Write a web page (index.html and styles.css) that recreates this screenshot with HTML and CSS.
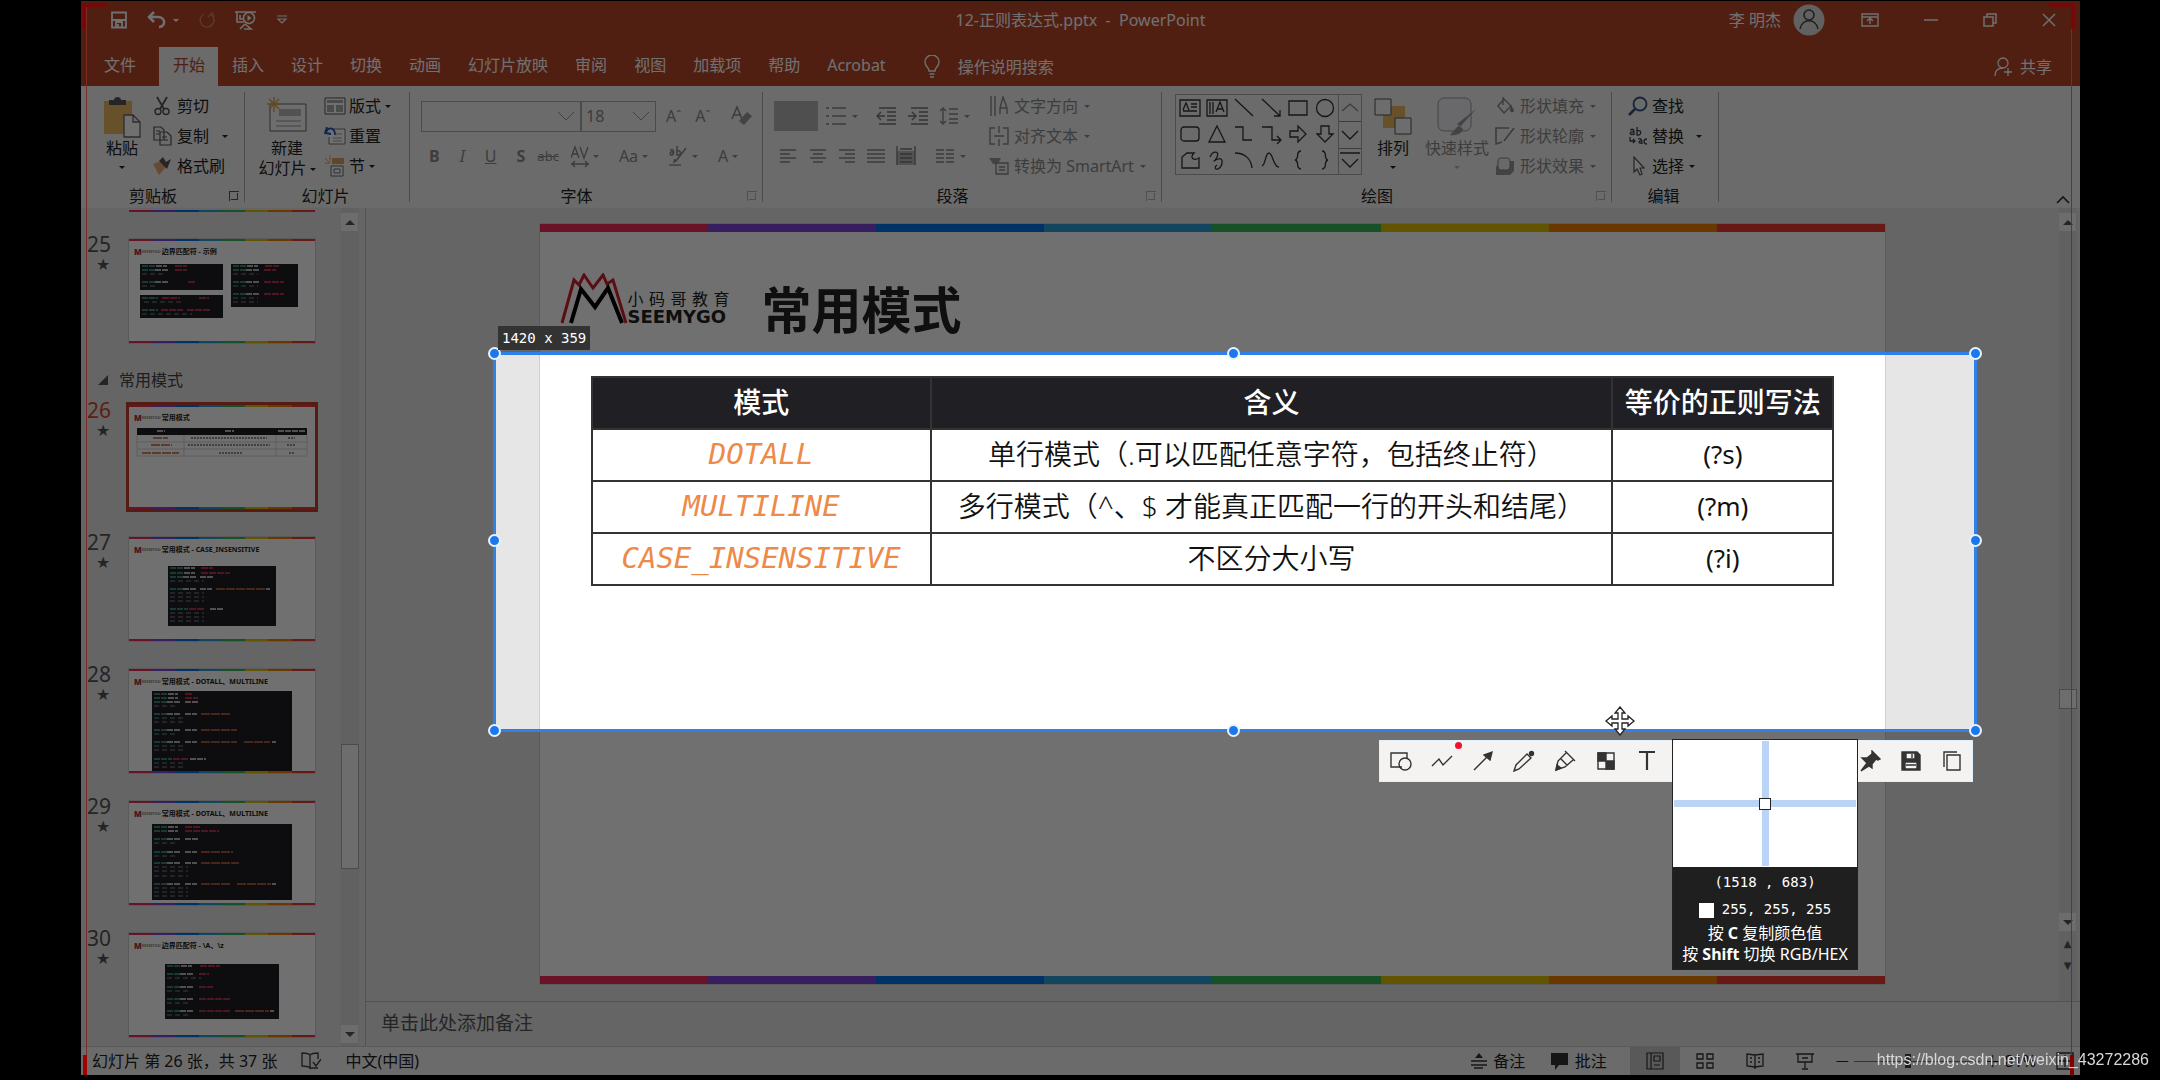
FILE: index.html
```html
<!DOCTYPE html>
<html lang="zh-CN">
<head>
<meta charset="utf-8">
<title>12-正则表达式.pptx - PowerPoint</title>
<link rel="stylesheet" href="styles.css">
</head>
<body>
<div class="app">
  <header class="titlebar">
    <div class="quick">
      <button aria-label="保存"><svg width="18" height="18" viewBox="0 0 18 18"><path d="M2 1.500h14v15H2zM2 9h14M6 16v-5h6v5M8 13v3" fill="none" stroke="#fff" stroke-width="1.800"/></svg></button>
      <button aria-label="撤消"><svg width="20" height="18" viewBox="0 0 20 18"><path d="M7 1L2 6l5 5M2 6h9c8 0 8 10 1 10" fill="none" stroke="#fff" stroke-width="2.500"/></svg><i class="caret"></i></button>
      <button aria-label="重复" class="faint"><svg width="18" height="18" viewBox="0 0 18 18"><path d="M6 3C-1 8 3 16 9 16s10-8 4-13M10 6l4-4 2 4" fill="none" stroke="#fff" stroke-width="1.500"/></svg></button>
      <button aria-label="从头开始"><svg width="22" height="20" viewBox="0 0 22 20"><path d="M0 2h21M2 2v10h7M5 5v4h4M10 14l-5 5M10 14l6 5H9" fill="none" stroke="#fff" stroke-width="1.600"/><circle cx="14" cy="8" r="5.500" fill="none" stroke="#fff" stroke-width="1.500"/><path d="M12.500 5l4 3-4 3z" fill="#fff"/></svg></button>
      <button aria-label="自定义"><svg width="12" height="12" viewBox="0 0 12 12"><path d="M1 2h10M2 5l4 4 4-4z" fill="none" stroke="#fff" stroke-width="1.200"/></svg></button>
    </div>
    <h1>12-正则表达式.pptx&nbsp; -&nbsp; PowerPoint</h1>
    <div class="window-tools">
      <span>李 明杰</span>
      <svg width="32" height="32" viewBox="0 0 32 32"><circle cx="16" cy="16" r="15.500" fill="#dcdcdc"/><circle cx="16" cy="11" r="5" fill="none" stroke="#444" stroke-width="1.500"/><path d="M7 25c2-11 16-11 18 0" fill="none" stroke="#444" stroke-width="1.500"/></svg>
      <button aria-label="功能区选项"><svg width="18" height="14" viewBox="0 0 18 14"><path d="M1 1h16v12H1zM1 4h16M9 11V6M6 8l3-3 3 3" fill="none" stroke="#fff" stroke-width="1.400"/></svg></button>
      <button aria-label="最小化"><svg width="14" height="14" viewBox="0 0 14 14"><path d="M0 7h14" stroke="#fff" stroke-width="1.500"/></svg></button>
      <button aria-label="还原"><svg width="14" height="14" viewBox="0 0 14 14"><path d="M1 4h9v9H1zM4 4V1h9v9h-3" fill="none" stroke="#fff" stroke-width="1.500"/></svg></button>
      <button aria-label="关闭"><svg width="14" height="14" viewBox="0 0 14 14"><path d="M1 1l12 12M13 1L1 13" stroke="#fff" stroke-width="1.500"/></svg></button>
    </div>
  </header>

  <nav class="tabs">
    <a class="file" href="#">文件</a><a class="active" href="#">开始</a><a href="#">插入</a><a href="#">设计</a><a href="#">切换</a><a href="#">动画</a><a href="#">幻灯片放映</a><a href="#">审阅</a><a href="#">视图</a><a href="#">加载项</a><a href="#">帮助</a><a href="#">Acrobat</a>
    <button class="tell"><svg width="16" height="24" viewBox="0 0 16 24"><path d="M5 16c0-4-4-4-4-9a7 7 0 0 1 14 0c0 5-4 5-4 9zM5.500 19h5M6 22h4" fill="none" stroke="#fff" stroke-width="1.400"/></svg>操作说明搜索</button>
    <button class="share"><svg width="20" height="20" viewBox="0 0 20 20"><circle cx="9" cy="6" r="5" fill="none" stroke="#fff" stroke-width="1.300"/><path d="M1 19c0-5 3-8 8-8M14 11v8M10 15h8" fill="none" stroke="#fff" stroke-width="1.300"/></svg>共享</button>
  </nav>

  <section class="ribbon">
    <div class="group clipboard">
      <div class="body">
        <button class="big"><svg width="38" height="42" viewBox="0 0 38 42"><path d="M1 5h28v33H1z" fill="#e8b860"/><path d="M6 9V4h5c0-4 7-4 7 0h5v5z" fill="#555"/><path d="M21 19h9l7 7v15H21zM30 19v7h7" fill="#fff" stroke="#666" stroke-width="1.300"/></svg><span>粘贴</span><i class="caret"></i></button>
        <div class="stack">
          <button><svg width="20" height="20" viewBox="0 0 20 20"><path d="M5 1l7 12M15 1L8 13" stroke="#555" stroke-width="1.800"/><circle cx="6" cy="15.500" r="3" fill="none" stroke="#456" stroke-width="1.400"/><circle cx="14" cy="15.500" r="3" fill="none" stroke="#456" stroke-width="1.400"/></svg>剪切</button>
          <button><svg width="20" height="20" viewBox="0 0 20 20"><path d="M2 1h7l3 3v10H2zM4 5h4M4 8h4M8 6h7l4 4v9H8zM10 11h5M10 14h6" fill="#f3f3f3" stroke="#555" stroke-width="1.200"/></svg>复制<i class="caret far"></i></button>
          <button><svg width="20" height="20" viewBox="0 0 20 20"><path d="M1 8l8-3 5 6-7 8z" fill="#e8a878"/><path d="M7 5l8 8 4-10-5 3-3-5z" fill="#555"/></svg>格式刷</button>
        </div>
      </div>
      <div class="caption">剪贴板<button class="launch" aria-label="更多"></button></div>
    </div>

    <div class="group slides">
      <div class="body">
        <button class="big"><svg width="42" height="40" viewBox="0 0 42 40"><path d="M4 7h36v27H4z" fill="#f8f8f8" stroke="#666"/><path d="M13 12h22v7H13z" fill="#bbb"/><path d="M10 24h25M10 29h25" stroke="#999"/><path d="M8 0v15M1 7h15M3 2l10 10M13 2L3 12" stroke="#e0a850" stroke-width="1.500"/></svg><span>新建</span><span>幻灯片<i class="caret"></i></span></button>
        <div class="stack">
          <button><svg width="22" height="18" viewBox="0 0 22 18"><path d="M1 1h20v16H1z" fill="#fff" stroke="#555"/><path d="M3 3h16v3H3zM3 8h7v7H3zM12 8h7v7h-7z" fill="#aaa"/></svg>版式<i class="caret"></i></button>
          <button><svg width="22" height="20" viewBox="0 0 22 20"><path d="M8 3h13v15H5V11" fill="#fff" stroke="#777"/><path d="M11 8h7M9 12h9M9 15h9" stroke="#999"/><path d="M3 1L1 7l6 1M2 6c3-6 9-4 9 3" fill="none" stroke="#2255b0" stroke-width="1.800"/></svg>重置</button>
          <button><svg width="22" height="22" viewBox="0 0 22 22"><path d="M1 3l5 5M6 0v6M1 8h5" stroke="#e0a060"/><path d="M8 3h12v6H8z" fill="#e0a060"/><path d="M7 11h12v10H7zM10 14h6v4h-6z" fill="#fff" stroke="#666"/></svg>节<i class="caret"></i></button>
        </div>
      </div>
      <div class="caption">幻灯片</div>
    </div>

    <div class="group font">
      <div class="body rows disabled">
        <div class="line">
          <select class="face" aria-label="字体"><option></option></select><select class="size" aria-label="字号"><option>18</option></select>
          <button class="grow">A<sup>ˆ</sup></button><button class="shrink">A<sup>ˇ</sup></button>
          <button aria-label="清除格式"><svg width="22" height="22" viewBox="0 0 22 22"><path d="M1 14L6 2l5 12M3 10h7" fill="none" stroke="#888" stroke-width="1.500"/><path d="M8 16l8-9 5 4-8 9z" fill="#999"/></svg></button>
        </div>
        <div class="line letters">
          <button><b>B</b></button><button><em>I</em></button><button><u>U</u></button><button><b>S</b></button><button class="mini"><s>abc</s></button>
          <button><svg width="18" height="22" viewBox="0 0 18 22"><path d="M0 13L4 2l4 11M2 9h5M9 2l4 11 4-11M0 19h18M4 16l-3 3 3 3M14 16l3 3-3 3" fill="none" stroke="#888" stroke-width="1.300"/></svg><i class="caret"></i></button>
          <button>Aa<i class="caret"></i></button>
          <button><svg width="20" height="22" viewBox="0 0 20 22"><path d="M2 5c5-2 4 5 2 5s-3-4 1-3v3M9 1v9c5 1 4-6 0-4M18 3L8 16l-2 1 1-3" fill="none" stroke="#888" stroke-width="1.500"/><path d="M1 19h12v2H1z" fill="#aaa"/></svg><i class="caret"></i></button>
          <button>A<i class="caret"></i></button>
        </div>
      </div>
      <div class="caption">字体<button class="launch off" aria-label="更多"></button></div>
    </div>

    <div class="group para">
      <div class="body disabled">
        <div class="rows">
          <div class="line">
            <button class="pressed" aria-label="项目符号"></button>
            <button><svg width="20" height="20" viewBox="0 0 20 20"><path d="M0 2h3M6 2h14M0 10h3M6 10h14M0 18h3M6 18h14" stroke="#888" stroke-width="1.500"/></svg><i class="caret"></i></button>
            <button><svg width="20" height="18" viewBox="0 0 20 18"><path d="M3 1h17M11 5h9M11 9h9M11 13h9M3 17h17M9 9H1M5 5L1 9l4 4" fill="none" stroke="#777" stroke-width="1.400"/></svg></button>
            <button><svg width="20" height="18" viewBox="0 0 20 18"><path d="M3 1h17M11 5h9M11 9h9M11 13h9M3 17h17M0 9h8M4 5l4 4-4 4" fill="none" stroke="#777" stroke-width="1.400"/></svg></button>
            <button><svg width="18" height="18" viewBox="0 0 18 18"><path d="M3 1v16M0 4l3-3 3 3M0 14l3 3 3-3M9 2h9M9 7h9M9 12h9M9 16h9" fill="none" stroke="#888" stroke-width="1.400"/></svg><i class="caret"></i></button>
          </div>
          <div class="line aligns">
            <button><svg width="18" height="14" viewBox="0 0 18 14"><path d="M0 1h16M0 5h10M0 9h16M0 13h10" stroke="#888" stroke-width="1.300"/></svg></button>
            <button><svg width="18" height="14" viewBox="0 0 18 14"><path d="M1 1h16M4 5h10M1 9h16M4 13h10" stroke="#888" stroke-width="1.300"/></svg></button>
            <button><svg width="18" height="14" viewBox="0 0 18 14"><path d="M1 1h16M7 5h10M1 9h16M7 13h10" stroke="#888" stroke-width="1.300"/></svg></button>
            <button><svg width="18" height="14" viewBox="0 0 18 14"><path d="M0 1h18M0 5h18M0 9h18M0 13h18" stroke="#888" stroke-width="1.300"/></svg></button>
            <button><svg width="20" height="20" viewBox="0 0 20 20"><path d="M1 5h18v14H1z" fill="#bbb"/><path d="M1 0v19M19 0v19M4 3h12M4 8h12M4 12h12M4 16h12" stroke="#777" stroke-width="1.300"/></svg></button>
            <button class="columns"><svg width="18" height="14" viewBox="0 0 18 14"><path d="M0 1h8M10 1h8M0 5h8M10 5h8M0 9h8M10 9h8M0 13h8M10 13h8" stroke="#888" stroke-width="1.300"/></svg><i class="caret"></i></button>
          </div>
        </div>
        <div class="stack">
          <button><svg width="20" height="20" viewBox="0 0 20 20"><path d="M2 0v20M6 0v20M11 18v-6l3-11 4 11v6M11 12h7" fill="none" stroke="#888" stroke-width="1.400"/></svg>文字方向<i class="caret"></i></button>
          <button><svg width="20" height="20" viewBox="0 0 20 20"><path d="M6 2H1v16h5M14 2h5v16h-5M10 0v7M10 13v7M5 10h10" fill="none" stroke="#888" stroke-width="1.400"/></svg>对齐文本<i class="caret"></i></button>
          <button><svg width="20" height="20" viewBox="0 0 20 20"><path d="M0 2h12l-3 6H4z" fill="#999"/><path d="M7 7h12v11H7zM10 11h6M10 14h6" fill="#eee" stroke="#888" stroke-width="1.300"/></svg>转换为 SmartArt<i class="caret"></i></button>
        </div>
      </div>
      <div class="caption">段落<button class="launch off" aria-label="更多"></button></div>
    </div>

    <div class="group draw">
      <div class="body">
        <div class="gallery">
          <div class="shapes">
            <button><svg viewBox="0 0 22 22"><path d="M1 3h20v16H1zM12 7h6M12 10h6M4 14h14M4 13l3-7 3 7"/></svg></button>
            <button><svg viewBox="0 0 22 22"><path d="M1 3h20v16H1zM4 5v12M7 5v12M10 15l4-10 4 10M11 12h6"/></svg></button>
            <button><svg viewBox="0 0 22 22"><path d="M2 2l18 17"/></svg></button>
            <button><svg viewBox="0 0 22 22"><path d="M2 2l18 17M20 13v6h-6"/></svg></button>
            <button><svg viewBox="0 0 22 22"><path d="M2 4h18v14H2z"/></svg></button>
            <button><svg viewBox="0 0 22 22"><circle cx="11" cy="11" r="8.500"/></svg></button>
            <button><svg viewBox="0 0 22 22"><rect x="2" y="4" width="18" height="14" rx="3"/></svg></button>
            <button><svg viewBox="0 0 22 22"><path d="M11 3l8 16H3z"/></svg></button>
            <button><svg viewBox="0 0 22 22"><path d="M2 4h8v13h9"/></svg></button>
            <button><svg viewBox="0 0 22 22"><path d="M2 4h10v13h8M17 13l4 4-4 4"/></svg></button>
            <button><svg viewBox="0 0 22 22"><path d="M3 8h8V3l8 8-8 8v-5H3z"/></svg></button>
            <button><svg viewBox="0 0 22 22"><path d="M7 3h8v8h4l-8 8-8-8h4z"/></svg></button>
            <button><svg viewBox="0 0 22 22"><path d="M3 19V8l5-4h7c-5 5 0 8 5 5v10z"/></svg></button>
            <button><svg viewBox="0 0 22 22"><path d="M4 8c3-7 10-6 7 0s-5 4 1 2 5 7 0 10c-3 1-4-2-1-4"/></svg></button>
            <button><svg viewBox="0 0 22 22"><path d="M2 4c10 0 16 6 17 15"/></svg></button>
            <button><svg viewBox="0 0 22 22"><path d="M2 17C6 15 5 4 9 4s4 14 10 14"/></svg></button>
            <button><svg viewBox="0 0 22 22"><path d="M14 2c-6 0-1 8-6 9 5 1 0 9 6 9"/></svg></button>
            <button><svg viewBox="0 0 22 22"><path d="M8 2c6 0 1 8 6 9-5 1 0 9-6 9"/></svg></button>
          </div>
          <div class="roll">
            <button aria-label="上一行"><svg viewBox="0 0 22 22"><path d="M3 14l8-7 8 7" stroke="#888"/></svg></button>
            <button aria-label="下一行"><svg viewBox="0 0 22 22"><path d="M3 7l8 8 8-8"/></svg></button>
            <button aria-label="其他"><svg viewBox="0 0 22 22"><path d="M1 3h20M3 9l8 8 8-8"/></svg></button>
          </div>
        </div>
        <button class="big arrange"><svg width="38" height="38" viewBox="0 0 38 38"><path d="M9 8h22v22H9z" fill="#e8b860"/><path d="M1 1h16v16H1zM21 20h16v16H21z" fill="#f8f8f8" stroke="#555"/></svg><span>排列</span><i class="caret"></i></button>
        <button class="big styles disabled"><svg width="42" height="40" viewBox="0 0 42 40"><rect x="2" y="1" width="33" height="33" rx="6" fill="#eeeef6" stroke="#999"/><path d="M40 12L24 30l-3-3zM23 28l-9 10c7 1 12-2 13-6z" fill="#999"/></svg><span>快速样式</span><i class="caret"></i></button>
        <div class="stack disabled">
          <button><svg width="20" height="20" viewBox="0 0 20 20"><path d="M9 3l7 7-7 7-6-7zM8 9V1" fill="none" stroke="#888" stroke-width="1.400"/><path d="M16 9l3 5c0 3-4 3-4 0z" fill="#888"/></svg>形状填充<i class="caret"></i></button>
          <button><svg width="20" height="20" viewBox="0 0 20 20"><path d="M14 2H1v16l6-2M19 2L9 15" fill="none" stroke="#888" stroke-width="1.600"/></svg>形状轮廓<i class="caret"></i></button>
          <button><svg width="20" height="20" viewBox="0 0 20 20"><path d="M5 5h14v10l-4 4H1v-8z" fill="#999"/><rect x="3" y="2" width="12" height="12" rx="3" fill="#eee" stroke="#888"/></svg>形状效果<i class="caret"></i></button>
        </div>
      </div>
      <div class="caption">绘图<button class="launch off" aria-label="更多"></button></div>
    </div>

    <div class="group edit">
      <div class="body">
        <div class="stack">
          <button><svg width="20" height="20" viewBox="0 0 20 20"><circle cx="12" cy="8" r="6.500" fill="none" stroke="#36527c" stroke-width="1.800"/><path d="M7 13l-6 6" stroke="#36527c" stroke-width="2.500"/></svg>查找</button>
          <button><svg width="20" height="20" viewBox="0 0 20 20"><path d="M2 4c4-2 4 0 4 5M6 6c-5-1-5 4 0 2M9 1v8c5 1 5-6 0-4M10 13c3-1 4 0 4 5M14 15c-4-1-4 3 0 2M19 13c-4 0-4 5 0 5M2 11v4h5M5 13l2 2-2 2" fill="none" stroke="#345" stroke-width="1.300"/></svg>替换<i class="caret far"></i></button>
          <button><svg width="20" height="20" viewBox="0 0 20 20"><path d="M6 1v15l3-3 3 6 2-1-2-6h4z" fill="#fff" stroke="#555" stroke-width="1.200"/></svg>选择<i class="caret"></i></button>
        </div>
      </div>
      <div class="caption">编辑</div>
    </div>
    <button class="collapse" aria-label="折叠功能区"><svg width="14" height="10" viewBox="0 0 14 10"><path d="M1 8l6-6 6 6" fill="none" stroke="#333" stroke-width="1.600"/></svg></button>
  </section>

  <main class="workspace">
    <aside class="panel">
      <ol class="list">
        <li class="tail"><div class="rainbow"></div></li>
        <li class="item"><div class="num">25<span>★</span></div>
          <div class="thumb"><div class="rainbow"></div><p class="heading"><b>M</b><small>SEEMYGO</small>边界匹配符 - 示例</p>
          <svg class="code" viewBox="0 0 186 80"><path class="bg" d="M11 3h83v26H11zM11 34h83v23H11zM102 3h67v43h-67z"/><path class="g" d="M13 5h13M13 9h13M13 21h13M13 37h16M13 49h16M104 5h13M104 9h13M104 21h13M104 33h13"/><path class="w" d="M27 5h11M26 9h14M26 21h14M118 5h11M117 9h14M117 21h14M117 33h14"/><path class="r" d="M46 5h12M46 9h12M59 21h8M33 37h18M70 37h10M32 49h22M58 49h24M136 5h14M135 9h12M135 21h20M135 33h20"/><path class="m" d="M13 13h22M13 25h13M15 41h38M13 53h50M104 13h25M104 25h25M104 37h25M104 41h25"/></svg><div class="rainbow"></div></div></li>
        <li class="section"><i></i>常用模式</li>
        <li class="item current"><div class="num">26<span>★</span></div>
          <div class="thumb"><div class="rainbow"></div><p class="heading"><b>M</b><small>SEEMYGO</small>常用模式</p>
          <svg class="code" viewBox="0 0 186 80"><path class="bg" d="M8 1h170v7H8z"/><path class="rule" d="M8 15h170M8 22h170M8 29h170M55 8v21M147 8v21M8 8v21M178 8v21"/><path class="w" d="M28 4h8M96 4h9M149 4h27"/><path class="o" d="M24 11h15M22 18h21M13 26h37"/><path d="M62 11h76M59 18h82M90 26h23M159 11h7M158 18h9M160 26h5" stroke="#777" stroke-dasharray="2 1"/></svg><div class="rainbow"></div></div></li>
        <li class="item"><div class="num">27<span>★</span></div>
          <div class="thumb"><div class="rainbow"></div><p class="heading"><b>M</b><small>SEEMYGO</small>常用模式 - CASE_INSENSITIVE</p>
          <svg class="code" viewBox="0 0 186 80"><path class="bg" d="M39 7h108v60H39z"/><path class="g" d="M41 9h13M41 14h13M41 18h13M41 30h13M41 50h18"/><path class="w" d="M55 9h11M55 14h11M54 18h14M71 18h14M54 30h14M71 30h12M137 30h4M81 50h14"/><path class="r" d="M72 9h12M72 14h29M60 50h16"/><path class="o" d="M87 30h49"/><path class="m" d="M41 22h34M41 34h34M41 38h34M41 42h34M41 54h34M41 58h34M41 62h34"/></svg><div class="rainbow"></div></div></li>
        <li class="item"><div class="num">28<span>★</span></div>
          <div class="thumb"><div class="rainbow"></div><p class="heading"><b>M</b><small>SEEMYGO</small>常用模式 - DOTALL、MULTILINE</p>
          <svg class="code" viewBox="0 0 186 80"><path class="bg" d="M23 0h140v80H23z"/><path class="g" d="M25 3h13M25 7h13M25 11h13M25 23h13M25 39h13M25 51h13M25 68h18"/><path class="w" d="M39 3h10M39 7h10M38 11h14M56 11h14M38 23h14M56 23h12M38 39h14M56 39h12M38 51h14M56 51h12M61 68h16M143 51h4"/><path class="r" d="M56 3h8M56 7h13M44 68h15"/><path class="o" d="M72 23h30M72 39h36M72 51h36M115 51h26"/><path class="m" d="M25 15h22M25 27h32M25 31h32M25 43h22M25 55h32M25 59h32M25 72h32M25 76h32"/></svg><div class="rainbow"></div></div></li>
        <li class="item"><div class="num">29<span>★</span></div>
          <div class="thumb"><div class="rainbow"></div><p class="heading"><b>M</b><small>SEEMYGO</small>常用模式 - DOTALL、MULTILINE</p>
          <svg class="code" viewBox="0 0 186 80"><path class="bg" d="M23 1h140v76H23z"/><path class="g" d="M25 4h13M25 8h13M25 16h13M25 29h13M25 40h13M25 61h13"/><path class="w" d="M39 4h10M39 8h10M38 16h14M56 16h14M38 29h14M56 29h12M38 40h14M56 40h12M38 61h14M56 61h12M143 61h4"/><path class="r" d="M56 4h16M56 8h34"/><path class="o" d="M72 29h32M72 40h38M72 61h30M108 61h34"/><path class="m" d="M25 20h22M25 33h22M25 44h34M25 48h34M25 53h34M25 65h34M25 69h34M25 73h34"/></svg><div class="rainbow"></div></div></li>
        <li class="item"><div class="num">30<span>★</span></div>
          <div class="thumb"><div class="rainbow"></div><p class="heading"><b>M</b><small>SEEMYGO</small>边界匹配符 - \A、\z</p>
          <svg class="code" viewBox="0 0 186 80"><path class="bg" d="M36 9h114v55H36z"/><path class="g" d="M38 11h13M38 19h13M38 32h13M38 44h13M38 56h13"/><path class="w" d="M52 11h11M51 19h14M51 32h14M51 44h14M51 56h14M141 56h4"/><path class="r" d="M71 11h20M70 19h10M70 32h14M70 44h31M70 56h32"/><path class="o" d="M106 56h34"/><path class="m" d="M38 23h34M38 36h22M38 48h22M38 60h22"/></svg><div class="rainbow"></div></div></li>
      </ol>
      <div class="scroll"><button aria-label="向上滚动" class="up"></button><div class="knob"></div><button aria-label="向下滚动" class="down"></button></div>
    </aside>

    <section class="editor">
      <div class="stage">
        <div class="canvas">
          <article class="slide">
            <div class="rainbow"></div>
            <header class="slide-head">
              <svg width="68" height="52" viewBox="0 0 68 52"><path d="M2 50L14 7l5 5 5-10 9 13 10-13 4 9 6-4 13 43" fill="none" stroke="#d01f2e" stroke-width="3"/><path d="M11 50L21 16l14 18 13-19 14 35" fill="none" stroke="#000" stroke-width="4"/></svg>
              <div class="brand"><span>小码哥教育</span><b>SEEMYGO</b></div>
              <h2>常用模式</h2>
            </header>
            <table>
              <thead><tr><th>模式</th><th>含义</th><th>等价的正则写法</th></tr></thead>
              <tbody>
                <tr><td>DOTALL</td><td>单行模式（.可以匹配任意字符，包括终止符）</td><td>(?s)</td></tr>
                <tr><td>MULTILINE</td><td>多行模式（^、$ 才能真正匹配一行的开头和结尾）</td><td>(?m)</td></tr>
                <tr><td>CASE_INSENSITIVE</td><td>不区分大小写</td><td>(?i)</td></tr>
              </tbody>
            </table>
            <div class="rainbow bottom"></div>
          </article>
        </div>
        <div class="scroll right"><button aria-label="向上滚动" class="up"></button><div class="knob"></div><button aria-label="向下滚动" class="down"></button><button aria-label="上一张" class="jump">▲</button><button aria-label="下一张" class="jump">▼</button></div>
      </div>
      <div class="notes">单击此处添加备注</div>
    </section>
  </main>

  <footer class="status">
    <span>幻灯片 第 26 张，共 37 张</span>
    <svg width="20" height="18" viewBox="0 0 20 18"><path d="M9 3C7 1 4 1 1 1v13c3 0 6 0 8 2V3c2-2 5-2 8-2v6M9 16h8M12 10l3 4 5-7" fill="none" stroke="#444" stroke-width="1.400"/></svg>
    <span>中文(中国)</span>
    <div class="view">
      <button><svg width="16" height="16" viewBox="0 0 16 16"><path d="M8 0l4 5H4z" fill="#333"/><path d="M0 8h16M0 12h16M3 15h9" stroke="#333" stroke-width="1.400"/></svg>备注</button>
      <button><svg width="19" height="18" viewBox="0 0 19 18"><path d="M1 1h17v12H9l-4 5v-5H1z" fill="#333"/></svg>批注</button>
      <button class="on" aria-label="普通视图"><svg width="18" height="18" viewBox="0 0 18 18"><path d="M1 1h16v16H1zM5 1v16M8 4h6v5H8zM8 13h6" fill="none" stroke="#333" stroke-width="1.200"/></svg></button>
      <button aria-label="幻灯片浏览"><svg width="18" height="18" viewBox="0 0 18 18"><path d="M1 2h6v5H1zM11 2h6v5h-6zM1 11h6v5H1zM11 11h6v5h-6z" fill="none" stroke="#333" stroke-width="1.300"/></svg></button>
      <button aria-label="阅读视图"><svg width="18" height="18" viewBox="0 0 18 18"><path d="M9 3L1 2v12l8 1 8-1V2zM9 3v14M4 6h2M4 10h2M12 6h2M12 10h2" fill="none" stroke="#333" stroke-width="1.300"/></svg></button>
      <button aria-label="放映"><svg width="18" height="18" viewBox="0 0 18 18"><path d="M0 2h18M2 2v8h14V2M9 10v6M6 17h6M6 6h6" fill="none" stroke="#333" stroke-width="1.300"/></svg></button>
      <div class="zoom"><span>－</span><input type="range" aria-label="缩放" min="0" max="100" value="42"><span>＋</span><span>81%</span></div>
      <svg width="18" height="18" viewBox="0 0 18 18"><path d="M1 1h16v16H1zM9 3v12M3 9h12" fill="none" stroke="#333" stroke-width="1.300"/></svg>
    </div>
  </footer>

  <div class="selection">
    <i class="dot nw"></i><i class="dot n"></i><i class="dot ne"></i><i class="dot w"></i><i class="dot e"></i><i class="dot sw"></i><i class="dot s"></i><i class="dot se"></i>
    <span class="measure">1420 x 359</span>
    <div class="tools">
      <button aria-label="形状"><svg viewBox="0 0 22 22"><path d="M12 17H1V3h16v6"/><circle cx="15" cy="14" r="6"/></svg></button>
      <button aria-label="折线" class="new"><svg viewBox="0 0 22 22"><path d="M1 16l7-7 4 6 9-9"/></svg></button>
      <button aria-label="箭头"><svg viewBox="0 0 22 22"><path d="M2 20L15 7"/><path class="solid" d="M20 2l-2 8-6-5z"/></svg></button>
      <button aria-label="铅笔"><svg viewBox="0 0 22 22"><path d="M14 4l4 4L6 19l-5 2 2-6z"/><circle class="solid" cx="18.500" cy="3.500" r="2"/></svg></button>
      <button aria-label="马克笔"><svg viewBox="0 0 22 22"><path d="M11 1l10 10M12 3L4 11 2 20l9-3 8-7M7 9l6 6"/><path class="solid" d="M3 15l4 3-5 2z"/></svg></button>
      <button aria-label="马赛克"><svg viewBox="0 0 22 22"><path d="M3 3h16v16H3z"/><path class="solid" d="M3 3h8v8H3zM11 11h8v8h-8z"/></svg></button>
      <button aria-label="文字"><svg viewBox="0 0 22 22"><path d="M3 2h16M11 2v18" stroke-width="2.200"/></svg></button>
      <button aria-label="贴图" class="pin"><svg viewBox="0 0 22 22"><path class="solid" d="M13 1l8 8-2 1-2-1-4 5v4l-3-2-8 5 6-8-5-5h5l5-4z"/></svg></button>
      <button aria-label="保存截图"><svg viewBox="0 0 22 22"><path class="solid" fill-rule="evenodd" d="M2 2h15l3 3v15H2zM6 3v6h9V3zM5 12v7h12v-7z"/><path d="M6 15h10M12 4v4"/></svg></button>
      <button aria-label="复制截图"><svg viewBox="0 0 22 22"><path d="M6 5h13v15H6zM3 17V2h13"/></svg></button>
    </div>
    <div class="magnifier">
      <div class="lens"><i></i></div>
      <p>(1518 , 683)</p>
      <p><i class="swatch"></i>255, 255, 255</p>
      <p class="hint">按 <b>C</b> 复制颜色值</p>
      <p class="hint">按 <b>Shift</b> 切换 RGB/HEX</p>
    </div>
    <svg class="cursor" width="30" height="30" viewBox="0 0 30 30"><path d="M15 1l5 6h-3v6h6v-3l6 5-6 5v-3h-6v6h3l-5 6-5-6h3v-6H7v3l-6-5 6-5v3h6V7h-3z" fill="#fff" stroke="#222" stroke-width="1.300"/></svg>
  </div>
  <div class="recorder"><i></i><i></i><i></i><i></i></div>
</div>
<a class="watermark" href="https://blog.csdn.net/weixin_43272286">https://blog.csdn.net/weixin_43272286</a>
</body>
</html>
```
FILE: styles.css
```css
* { box-sizing: border-box; }
body {
  margin: 0;
  background: #000;
  font: 16px/20px "Noto Sans", "Noto Sans CJK SC", sans-serif;
  color: #222;
}
button {
  display: flex;
  align-items: center;
  justify-content: center;
  padding: 0;
  border: 0;
  background: none;
  font: inherit;
  color: inherit;
  white-space: nowrap;
}
svg { display: block; flex: none; }
p, h1, h2, ol { margin: 0; padding: 0; }

.app {
  position: relative;
  display: flex;
  flex-direction: column;
  min-height: calc(100vh - 6px);
  margin: 1px 80px 5px 81px;
  overflow: hidden;
  background: #e6e6e6;
}
.caret {
  flex: none;
  display: inline-block;
  border: 3px solid transparent;
  border-top-color: currentColor;
  border-bottom: 0;
  margin-left: 6px;
  vertical-align: middle;
}

/* title bar and tabs */
.titlebar {
  display: grid;
  grid-template-columns: 1fr auto 1fr;
  align-items: center;
  height: 46px;
  padding-bottom: 8px;
  background: #b7472a;
  color: #fff;
}
.titlebar h1 { font-size: 16px; font-weight: 400; }
.quick { display: flex; align-items: center; gap: 19px; padding-left: 29px; }
.faint { opacity: .3; }
.window-tools { display: flex; justify-content: flex-end; align-items: center; padding-right: 24px; }
.window-tools svg { margin-left: 12px; }
.window-tools button svg { margin-left: 45px; }
.window-tools button:nth-of-type(1) svg { margin-left: 36px; }

.tabs { display: flex; height: 39px; background: #b7472a; color: #fff; padding-left: 9px; }
.tabs a {
  padding: 0 13px 0 14px;
  line-height: 36px;
  color: inherit;
  text-decoration: none;
}
.tabs .file { margin-right: 10px; }
.tabs .active { background: #f3f3f3; color: #b7472a; }
.tell { gap: 18px; margin-left: 25px; }
.share { gap: 6px; margin-left: auto; margin-right: 28px; }

/* ribbon */
.ribbon { display: flex; height: 122px; background: #f3f3f3; border-bottom: 1px solid #eee; }
.group { position: relative; flex: none; padding-top: 5px; }
.group::after {
  content: "";
  position: absolute;
  inset: 6px 0 5px auto;
  width: 1px;
  background: #aaa;
}
.group .body { display: flex; height: 90px; }
.caption { position: relative; text-align: center; line-height: 30px; padding-right: 20px; }
.slides .caption, .edit .caption { padding-right: 4px; }
.launch { position: absolute; right: 6px; top: 10px; width: 10px; height: 10px; border: solid #555; border-width: 1px 0 0 1px; }
.launch::after { content: ""; width: 6px; height: 6px; border: solid #555; border-width: 0 1px 1px 0; }
.launch.off { opacity: .4; }
.disabled { color: #8c8c8c; }
.stack { display: grid; grid-template-rows: 30px 30px 30px; justify-items: start; }
.stack button { gap: 5px; }
.stack .caret { margin-left: 1px; }
.stack .caret.far { margin-left: 8px; }
.big { flex-direction: column; justify-content: flex-start; padding-top: 5px; }
.big svg { height: 42px; }
.big > .caret { margin: 8px 0 0; }
.big span .caret { margin-left: 3px; }

.clipboard { width: 164px; }
.clipboard .big { width: 48px; margin: 0 6px 0 17px; }
.slides { width: 165px; }
.slides .big { width: 70px; margin: 0 2px 0 7px; }
.slides .stack button { gap: 3px; }

.rows { display: flex; flex-direction: column; }
.group .rows { padding-top: 10px; gap: 10px; }
.line { display: flex; align-items: center; height: 30px; }
.font { width: 353px; }
.font .body { padding-left: 11px; }
.font select {
  appearance: none;
  height: 31px;
  padding: 0 4px;
  border: 1px solid #aaa;
  border-radius: 0;
  color: #888;
  font: inherit;
  background: linear-gradient(-45deg, transparent 46%, #999 46% 56%, transparent 56%) right 6px center / 8px 8px no-repeat,
    linear-gradient(45deg, transparent 46%, #999 46% 56%, transparent 56%) right 14px center / 8px 8px no-repeat;
}
.font .face { width: 160px; }
.font .size { width: 75px; margin-right: 10px; }
.font sup { line-height: 8px; font-size: 12px; }
.grow { margin-right: 14px; }
.shrink { margin-right: 20px; }
.letters { gap: 20px; padding-left: 8px; }
.letters .caret { margin-left: 4px; }
.letters .mini { font-size: 13px; margin: 0 -8px; }

.para { width: 399px; }
.para .body { padding-left: 11px; }
.para .rows { width: 215px; }
.para .line { gap: 12px; }
.para .pressed { width: 44px; height: 30px; margin-right: -4px; background: #b5b5b5; }
.para .line .caret { margin: 0 6px; }
.para .aligns { gap: 11px; padding-left: 6px; }
.para .columns { margin-left: 9px; }

.draw { width: 450px; }
.draw .body { padding-left: 13px; }
.gallery { display: flex; height: 81px; margin-top: 3px; border: 1px solid #aaa; }
.shapes { display: grid; grid-template: repeat(3, 26px) / repeat(6, 27px); }
.gallery svg { width: 22px; height: 22px; fill: none; stroke: #333; stroke-width: 1.300; }
.roll { display: grid; grid-template-rows: repeat(3, 1fr); border-left: 1px solid #aaa; }
.roll button + button { border-top: 1px solid #888; }
.arrange { width: 44px; margin: 0 9px; }
.styles { width: 66px; margin-right: 5px; }
.styles > .caret { opacity: .6; }
.edit { width: 107px; }
.edit .body { padding-left: 16px; }
.edit .stack button { gap: 4px; }
.collapse { margin: auto 10px 2px auto; }

/* coloured strip at slide edges */
.rainbow {
  height: 2px;
  background: linear-gradient(90deg, #ee2c5c 12.5%, #7d45d8 12.5% 25%, #0073e6 25% 37.5%, #2a9fd6 37.5% 50%, #35b85c 50% 62.5%, #e0c000 62.5% 75%, #f08000 75% 87.5%, #e83a30 87.5%);
}

/* thumbnails */
.workspace { display: flex; flex: 1; }
.panel { display: flex; flex: none; width: 285px; border-right: 1px solid #bbb; }
.list { flex: 1; list-style: none; padding-left: 6px; overflow: hidden; }
.tail { padding: 2px 0 0 42px; width: 228px; }
.item { display: flex; margin-bottom: 28px; }
.item:last-child { margin-bottom: 0; }
.tail + .item { margin: 27px 0 0; }
.num { width: 42px; font-size: 21px; line-height: 22px; color: #555; margin-top: -6px; }
.num span { display: block; padding-left: 9px; font: 16px/20px "DejaVu Sans", sans-serif; }
.thumb {
  display: flex;
  flex-direction: column;
  width: 186px;
  height: 104px;
  background: #fff;
  box-shadow: 0 0 0 1px #ccc;
}
.current .num { color: #d24726; }
.current .num span { color: #555; }
.current .thumb { box-shadow: 0 0 0 3px #c43e2c; }
.heading { display: flex; align-items: center; height: 20px; padding: 2px 0 0 5px; font-size: 7px; font-weight: 700; color: #222; white-space: nowrap; }
.heading b { font-size: 8px; color: #a33; }
.heading small { width: 20px; font-size: 4px; color: #888; }
.code { width: 186px; height: 80px; fill: none; }
.code .bg { fill: #1e1f24; }
.code path { stroke-width: 2; opacity: .8; }
.code .bg { opacity: 1; }
.code .rule { stroke: #ccc; stroke-width: 1; }
.g { stroke: #3f9f88; stroke-dasharray: 6 1; }
.w { stroke: #ddd; stroke-dasharray: 6 1; }
.r { stroke: #d83850; stroke-dasharray: 7 1; }
.o { stroke: #c8683c; stroke-dasharray: 9 1; }
.m { stroke: #5c6068; stroke-dasharray: 5 3; }
.section { display: flex; align-items: center; gap: 11px; height: 62px; padding: 11px 0 0 11px; font-size: 16px; color: #444; }
.section i { border: 5px solid transparent; border-right-color: #555; border-bottom-color: #555; }

.scroll { display: flex; flex-direction: column; width: 18px; margin-right: 6px; padding: 5px 0 3px; background: #dcdcdc; }
.scroll button { width: 17px; height: 18px; background: #f8f8f8; }
.up::before, .down::before { content: ""; border: 5px solid transparent; }
.up::before { border-bottom-color: #555; border-top: 0; }
.down::before { border-top-color: #555; border-bottom: 0; }
.knob { height: 125px; margin: 513px 0 auto; background: #f8f8f8; border: 1px solid #aaa; }
.scroll.right { margin-right: 3px; padding-bottom: 26px; }
.right .knob { height: 20px; margin-top: 458px; }
.scroll .jump { height: 18px; margin-top: 4px; background: none; font: 10px/10px "DejaVu Sans", sans-serif; color: #555; }

/* slide */
.editor { flex: 1; display: flex; flex-direction: column; }
.stage { display: flex; flex: 1; }
.canvas { flex: 1; padding: 16px 0 17px; display: flex; justify-content: center; align-items: flex-start; }
.slide {
  display: flex;
  flex-direction: column;
  width: 79.5%;
  min-height: 760px;
  background: #fff;
  box-shadow: 0 0 0 1px #d0d0d0;
}
.slide .rainbow { height: 8px; }
.slide .bottom { margin-top: auto; }
.slide-head { display: flex; align-items: flex-end; height: 93px; padding-left: 20px; }
.brand { width: 102px; display: flex; flex-direction: column; line-height: 18px; }
.brand span { font-size: 16px; text-align-last: justify; }
.brand b { font: 700 18px/17px "DejaVu Sans", sans-serif; }
.slide h2 { margin: 0 0 -12px 32px; font: 700 50px/60px "Noto Sans CJK SC", sans-serif; color: #222; }
.slide table {
  width: 92.4%;
  margin: 51px 0 0 3.8%;
  border-collapse: collapse;
  table-layout: fixed;
  font: 28px/32px "Noto Sans", "Noto Sans CJK SC", sans-serif;
  color: #111;
}
.slide th, .slide td { height: 52px; padding: 0 0 2px; border: 2px solid #333; text-align: center; font-weight: 350; white-space: nowrap; }
.slide th { background: #202024; color: #fff; font-weight: 500; }
.slide th:nth-child(1) { width: 27.3%; }
.slide th:nth-child(3) { width: 17.8%; }
.slide td:first-child { font: italic 29px/32px "DejaVu Sans Mono", monospace; color: #ed8a48; }
.slide td:last-child { font: 26px/32px "Noto Sans", sans-serif; }
.notes { height: 45px; padding-left: 15px; border-top: 1px solid #bbb; font-size: 19px; line-height: 42px; color: #555; }

/* status bar */
.status { display: flex; align-items: center; height: 29px; padding: 0 6px 0 11px; gap: 24px; background: #f3f3f3; border-top: 1px solid #ccc; }
.view { display: flex; align-items: center; align-self: stretch; margin-left: auto; }
.view button { gap: 6px; width: 50px; align-self: stretch; }
.view button:nth-child(1) { width: 56px; margin-right: 24px; }
.view button:nth-child(2) { width: 56px; margin-right: 24px; }
.view .on { background: #cacaca; }
.zoom { display: flex; align-items: center; gap: 4px; margin-left: 4px; margin-right: 20px; }
.zoom input { appearance: none; width: 126px; height: 1px; margin: 0; background: #777; }
.zoom input::-webkit-slider-thumb { appearance: none; width: 6px; height: 14px; background: #444; }

/* screen capture overlay */
.selection {
  position: absolute;
  inset: 351px 103px auto 412px;
  height: 380px;
  border: 3px solid #2f80e8;
  box-shadow: 0 0 0 2400px rgba(0, 0, 0, .56);
}
.dot {
  position: absolute;
  width: 13px;
  height: 13px;
  margin: -8px;
  border: 2px solid #e8f2ff;
  border-radius: 50%;
  background: #1a78ee;
}
.nw, .n, .ne { top: 0; }
.sw, .s, .se { bottom: 0; }
.nw, .w, .sw { left: 0; }
.ne, .e, .se { right: 0; }
.n, .s { left: 50%; }
.w, .e { top: 50%; }
.measure {
  position: absolute;
  left: 2px;
  top: -29px;
  padding: 0 4px;
  font: 14px/24px "DejaVu Sans Mono", monospace;
  color: #fff;
  background: #333;
}
.tools {
  position: absolute;
  right: 1px;
  top: 385px;
  display: flex;
  width: 594px;
  height: 42px;
  background: #f5f3f2;
  border: 1px solid #e0f0fc;
}
.tools button { position: relative; width: 41px; }
.tools svg { width: 22px; height: 22px; fill: none; stroke: #333; stroke-width: 1.400; }
.tools .solid { fill: #333; }
.tools .pin { margin-left: auto; }
.new::after { content: ""; position: absolute; right: 0; top: 1px; width: 7px; height: 7px; border-radius: 50%; background: #f01030; }
.magnifier {
  position: absolute;
  right: 116px;
  top: 384px;
  width: 186px;
  padding-bottom: 4px;
  border: 1px solid #222;
  background: #1f1f1f;
  color: #fff;
  text-align: center;
  font: 14px/27px "DejaVu Sans Mono", monospace;
}
.lens {
  display: grid;
  place-items: center;
  height: 127px;
  margin-bottom: 2px;
  border: 1px solid #fff;
  background: linear-gradient(#bad4f5, #bad4f5) center / 100% 7px no-repeat,
    linear-gradient(#bad4f5, #bad4f5) center / 7px 100% no-repeat, #fff;
}
.lens i { width: 12px; height: 12px; border: 1px solid #222; background: #fff; }
.swatch { display: inline-block; width: 15px; height: 15px; margin-right: 8px; background: #fff; vertical-align: middle; }
.magnifier .hint { font: 16px/21px "Noto Sans", "Noto Sans CJK SC", sans-serif; white-space: nowrap; }
.cursor { position: absolute; right: 339px; top: 351px; }

/* recording frame */
.recorder { position: absolute; inset: 2px 8px 0 5px; border: 1px solid #7c2a2a; border-top-color: #6a1010; border-bottom: 0; pointer-events: none; }
.recorder i { position: absolute; width: 26px; height: 26px; border: 0 solid #780808; }
.recorder i:nth-child(1) { left: -5px; top: -1px; border-width: 4px 0 0 4px; }
.recorder i:nth-child(2) { right: -4px; top: -1px; border-width: 4px 4px 0 0; }
.recorder i:nth-child(3) { left: -4px; bottom: 0; height: 20px; border-left: 4px solid #a00000; }
.recorder i:nth-child(4) { right: -3px; bottom: 0; height: 20px; border-right: 4px solid #800000; }

.watermark {
  position: fixed;
  right: 11px;
  bottom: 10px;
  font: 16px/20px "Liberation Sans", sans-serif;
  color: #d8d8d8;
  text-decoration: none;
}
```
